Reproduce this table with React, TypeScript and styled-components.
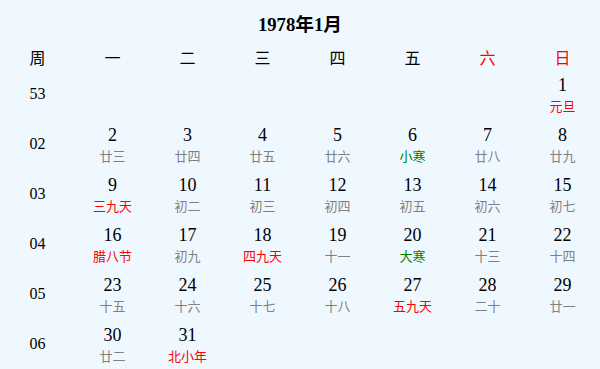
import React from "react";
import styled, { createGlobalStyle } from "styled-components";

const Global = createGlobalStyle`
  html, body { margin: 0; padding: 0; background: #f0f8ff; }
  body { font-family: "Liberation Serif", "Noto Sans CJK SC", serif; color: #000; }
`;

const Page = styled.div`
  width: 600px;
  height: 369px;
  background: #f0f8ff;
  overflow: hidden;
`;

const Title = styled.h3`
  margin: 0;
  padding-top: 1px;
  height: 48px;
  line-height: 48px;
  text-align: center;
  font-size: 18.72px;
  font-weight: bold;
  font-family: "Liberation Serif", "Noto Sans CJK SC", serif;
`;

const Grid = styled.div`
  display: grid;
  grid-template-columns: repeat(8, 75px);
`;

const HeadCell = styled.div<{ $red?: boolean }>`
  height: 20px;
  line-height: 20px;
  text-align: center;
  font-size: 16px;
  color: ${(p) => (p.$red ? "#ff0000" : "#000")};
`;

const WeekCell = styled.div`
  height: 50px;
  display: flex;
  align-items: center;
  justify-content: center;
  font-size: 16px;
`;

const DayCell = styled.div`
  box-sizing: border-box;
  height: 50px;
  padding-top: 6px;
  display: flex;
  flex-direction: column;
  align-items: center;
  justify-content: flex-start;
`;

const DayNum = styled.div`
  font-size: 18px;
  line-height: 20px;
  font-family: "Liberation Serif", serif;
`;

type Kind = "normal" | "fest" | "term";

const Lunar = styled.div<{ $kind: Kind }>`
  margin-top: 2px;
  font-size: 13px;
  line-height: 18px;
  font-family: "Noto Sans CJK SC", sans-serif;
  color: ${(p) =>
    p.$kind === "fest" ? "#ff0000" : p.$kind === "term" ? "#008000" : "#808080"};
`;

type Day = { d: number; l: string; k?: Kind } | null;

const weeks: { w: string; days: Day[] }[] = [
  { w: "53", days: [null, null, null, null, null, null, { d: 1, l: "元旦", k: "fest" }] },
  {
    w: "02",
    days: [
      { d: 2, l: "廿三" },
      { d: 3, l: "廿四" },
      { d: 4, l: "廿五" },
      { d: 5, l: "廿六" },
      { d: 6, l: "小寒", k: "term" },
      { d: 7, l: "廿八" },
      { d: 8, l: "廿九" },
    ],
  },
  {
    w: "03",
    days: [
      { d: 9, l: "三九天", k: "fest" },
      { d: 10, l: "初二" },
      { d: 11, l: "初三" },
      { d: 12, l: "初四" },
      { d: 13, l: "初五" },
      { d: 14, l: "初六" },
      { d: 15, l: "初七" },
    ],
  },
  {
    w: "04",
    days: [
      { d: 16, l: "腊八节", k: "fest" },
      { d: 17, l: "初九" },
      { d: 18, l: "四九天", k: "fest" },
      { d: 19, l: "十一" },
      { d: 20, l: "大寒", k: "term" },
      { d: 21, l: "十三" },
      { d: 22, l: "十四" },
    ],
  },
  {
    w: "05",
    days: [
      { d: 23, l: "十五" },
      { d: 24, l: "十六" },
      { d: 25, l: "十七" },
      { d: 26, l: "十八" },
      { d: 27, l: "五九天", k: "fest" },
      { d: 28, l: "二十" },
      { d: 29, l: "廿一" },
    ],
  },
  {
    w: "06",
    days: [{ d: 30, l: "廿二" }, { d: 31, l: "北小年", k: "fest" }, null, null, null, null, null],
  },
];

const heads = ["周", "一", "二", "三", "四", "五", "六", "日"];

export default function App() {
  return (
    <Page>
      <Global />
      <Title>1978年1月</Title>
      <Grid>
        {heads.map((h, i) => (
          <HeadCell key={h} $red={i >= 6}>
            {h}
          </HeadCell>
        ))}
        {weeks.map((wk) => (
          <React.Fragment key={wk.w}>
            <WeekCell>{wk.w}</WeekCell>
            {wk.days.map((day, i) =>
              day ? (
                <DayCell key={i}>
                  <DayNum>{day.d}</DayNum>
                  <Lunar $kind={day.k ?? "normal"}>{day.l}</Lunar>
                </DayCell>
              ) : (
                <DayCell key={i} />
              )
            )}
          </React.Fragment>
        ))}
      </Grid>
    </Page>
  );
}
